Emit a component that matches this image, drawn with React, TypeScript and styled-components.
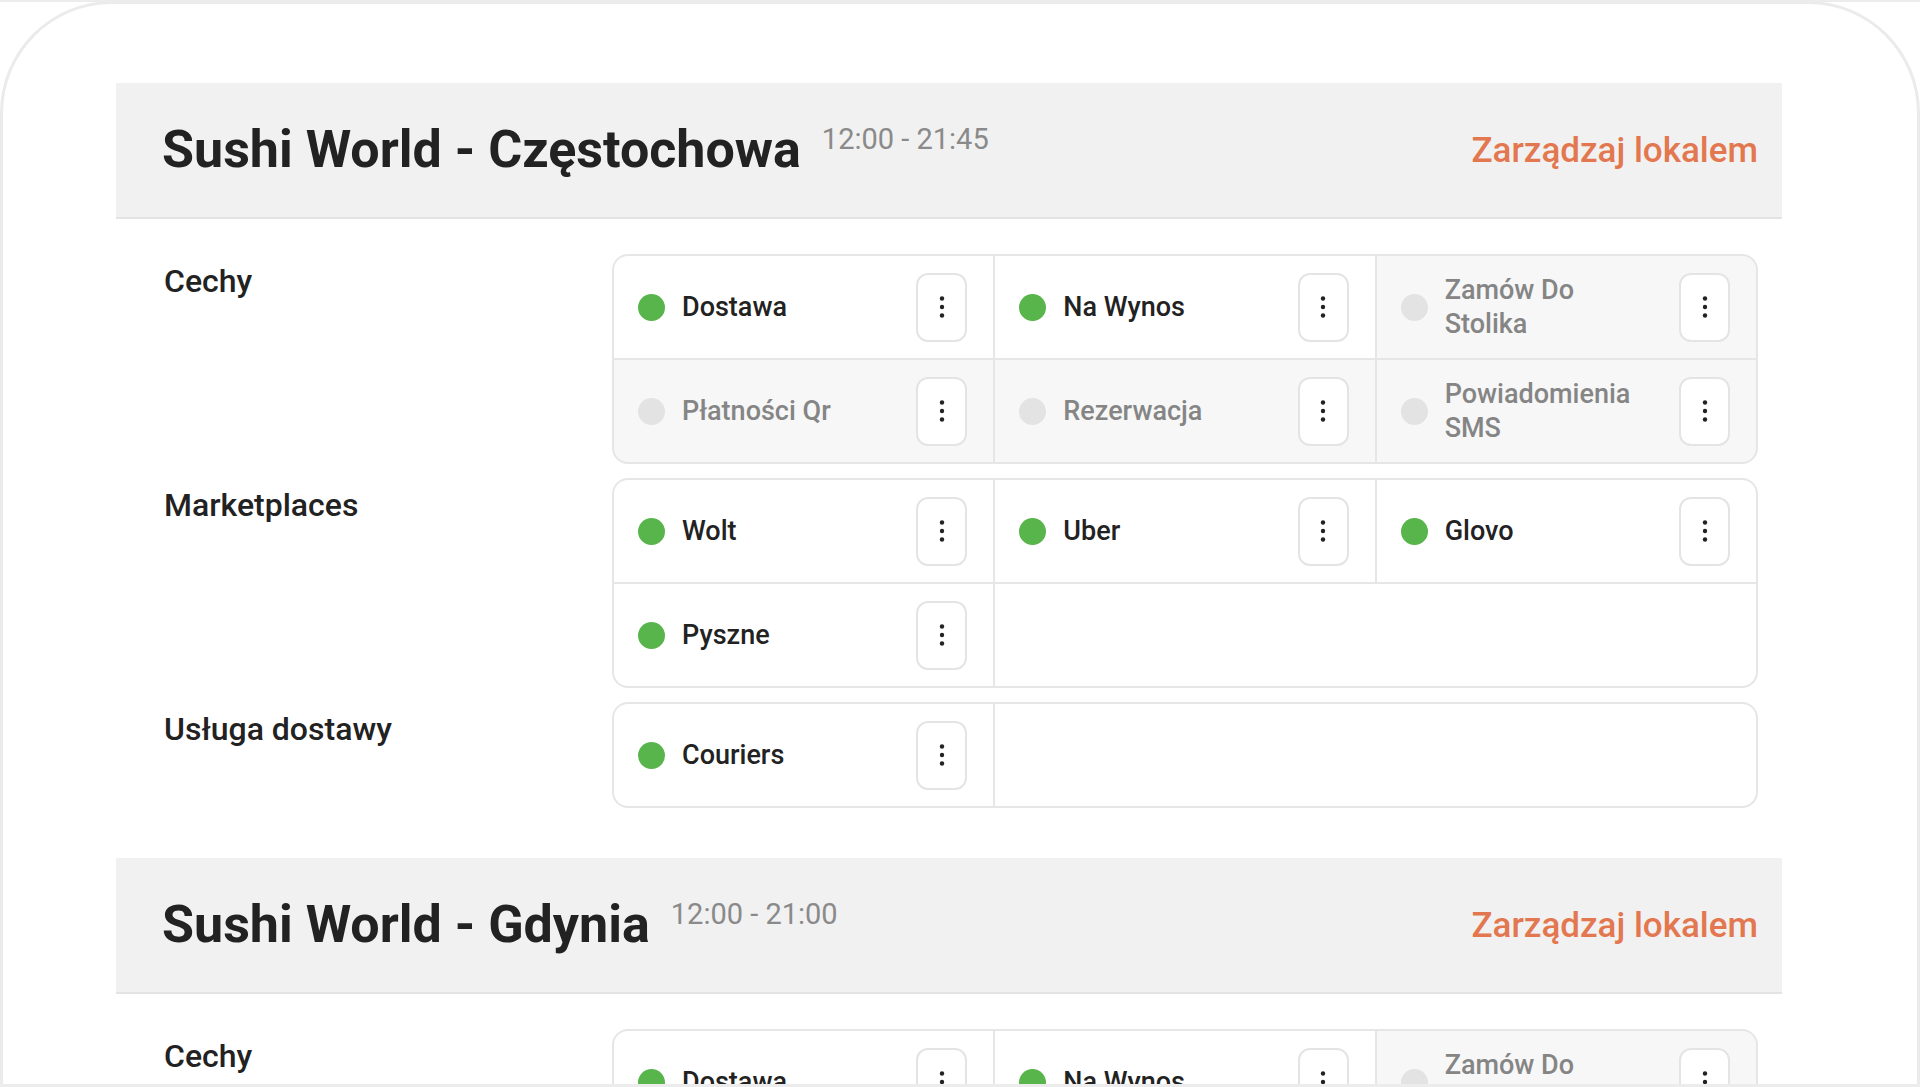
import styled, { createGlobalStyle } from "styled-components";

const GlobalStyle = createGlobalStyle`
  html, body {
    margin: 0;
    padding: 0;
    background: #ffffff;
    font-family: Roboto, "Liberation Sans", Arial, sans-serif;
    color: #222222;
  }
  * {
    box-sizing: border-box;
  }
`;

const Screen = styled.div`
  width: 1920px;
  height: 1087px;
  overflow: hidden;
  border-top: 2px solid #ececec;
  border-bottom: 3px solid #ececec;
`;

const Frame = styled.div`
  height: 1084px;
  margin-top: -1px;
  border: 3px solid #ebebeb;
  border-bottom: none;
  border-radius: 112px 112px 0 0;
  padding: 79px 135px 0 113px;
  overflow: hidden;
`;

const Venue = styled.section`
  padding-bottom: 50px;
`;

const VenueHeader = styled.header`
  display: flex;
  align-items: center;
  height: 136px;
  padding: 0 24px 0 46px;
  background: #f1f1f1;
  border-bottom: 2px solid #e3e3e3;
`;

const TitleGroup = styled.div`
  display: flex;
  align-items: flex-start;
  gap: 21px;
`;

const Title = styled.h1`
  margin: 0;
  font-size: 52px;
  font-weight: 700;
  line-height: 1;
  color: #222222;
`;

const Hours = styled.span`
  margin-top: 1px;
  font-size: 29px;
  line-height: 1;
  color: #8a8a8a;
`;

const ManageLink = styled.a`
  margin-left: auto;
  font-size: 35px;
  font-weight: 500;
  line-height: 1;
  color: #e3774f;
  text-decoration: none;
  cursor: pointer;
`;

const VenueBody = styled.div`
  display: flex;
  flex-direction: column;
  gap: 14px;
  padding: 35px 24px 0 48px;
`;

const Row = styled.div`
  display: grid;
  grid-template-columns: 448px 1fr;
  align-items: start;
`;

const RowLabel = styled.h2`
  margin: 0;
  padding-top: 8px;
  font-size: 32px;
  font-weight: 500;
  line-height: 38px;
  color: #222222;
`;

const Card = styled.div`
  display: grid;
  grid-template-columns: repeat(3, 1fr);
  grid-auto-rows: 102px;
  gap: 2px;
  background: #e6e6e6;
  border: 2px solid #e6e6e6;
  border-radius: 16px;
  overflow: hidden;
`;

const Cell = styled.div<{ $active: boolean }>`
  display: flex;
  align-items: center;
  padding: 0 26px 0 24px;
  background: ${(p) => (p.$active ? "#ffffff" : "#f7f7f7")};
  color: ${(p) => (p.$active ? "#222222" : "#858585")};
`;

const Filler = styled.div<{ $span: number }>`
  grid-column: span ${(p) => p.$span};
  background: #ffffff;
`;

const Dot = styled.span<{ $active: boolean }>`
  flex: none;
  width: 27px;
  height: 27px;
  margin-right: 17px;
  border-radius: 50%;
  background: ${(p) => (p.$active ? "#58b54b" : "#e3e3e3")};
`;

const CellLabel = styled.span`
  flex: 1;
  margin-right: 24px;
  font-size: 27px;
  font-weight: 500;
  line-height: 34px;
`;

const MenuButton = styled.button`
  flex: none;
  display: flex;
  align-items: center;
  justify-content: center;
  width: 51px;
  height: 69px;
  padding: 0;
  background: #ffffff;
  border: 2px solid #e4e4e4;
  border-radius: 12px;
  cursor: pointer;
`;

function KebabIcon(): JSX.Element {
  return (
    <svg width="8" height="26" viewBox="0 0 8 26" aria-hidden="true">
      <circle cx="4" cy="4.5" r="2.2" fill="#222" />
      <circle cx="4" cy="13" r="2.2" fill="#222" />
      <circle cx="4" cy="21.5" r="2.2" fill="#222" />
    </svg>
  );
}

type Feature = { name: string; active: boolean };
type Group = { label: string; items: Feature[] };
type Place = { name: string; hours: string; groups: Group[] };

const cechy: Feature[] = [
  { name: "Dostawa", active: true },
  { name: "Na Wynos", active: true },
  { name: "Zamów Do Stolika", active: false },
  { name: "Płatności Qr", active: false },
  { name: "Rezerwacja", active: false },
  { name: "Powiadomienia SMS", active: false },
];

const marketplaces: Feature[] = [
  { name: "Wolt", active: true },
  { name: "Uber", active: true },
  { name: "Glovo", active: true },
  { name: "Pyszne", active: true },
];

const places: Place[] = [
  {
    name: "Sushi World - Częstochowa",
    hours: "12:00 - 21:45",
    groups: [
      { label: "Cechy", items: cechy },
      { label: "Marketplaces", items: marketplaces },
      { label: "Usługa dostawy", items: [{ name: "Couriers", active: true }] },
    ],
  },
  {
    name: "Sushi World - Gdynia",
    hours: "12:00 - 21:00",
    groups: [
      { label: "Cechy", items: cechy },
      { label: "Marketplaces", items: marketplaces },
    ],
  },
];

function FeatureGrid({ items }: { items: Feature[] }): JSX.Element {
  const rest = items.length % 3 === 0 ? 0 : 3 - (items.length % 3);
  return (
    <Card>
      {items.map((item) => (
        <Cell key={item.name} $active={item.active}>
          <Dot $active={item.active} />
          <CellLabel>{item.name}</CellLabel>
          <MenuButton aria-label="Opcje">
            <KebabIcon />
          </MenuButton>
        </Cell>
      ))}
      {rest > 0 && <Filler $span={rest} />}
    </Card>
  );
}

function App(): JSX.Element {
  return (
    <Screen>
      <GlobalStyle />
      <Frame>
        {places.map((place) => (
          <Venue key={place.name}>
            <VenueHeader>
              <TitleGroup>
                <Title>{place.name}</Title>
                <Hours>{place.hours}</Hours>
              </TitleGroup>
              <ManageLink>Zarządzaj lokalem</ManageLink>
            </VenueHeader>
            <VenueBody>
              {place.groups.map((group) => (
                <Row key={group.label}>
                  <RowLabel>{group.label}</RowLabel>
                  <FeatureGrid items={group.items} />
                </Row>
              ))}
            </VenueBody>
          </Venue>
        ))}
      </Frame>
    </Screen>
  );
}

export default App;
